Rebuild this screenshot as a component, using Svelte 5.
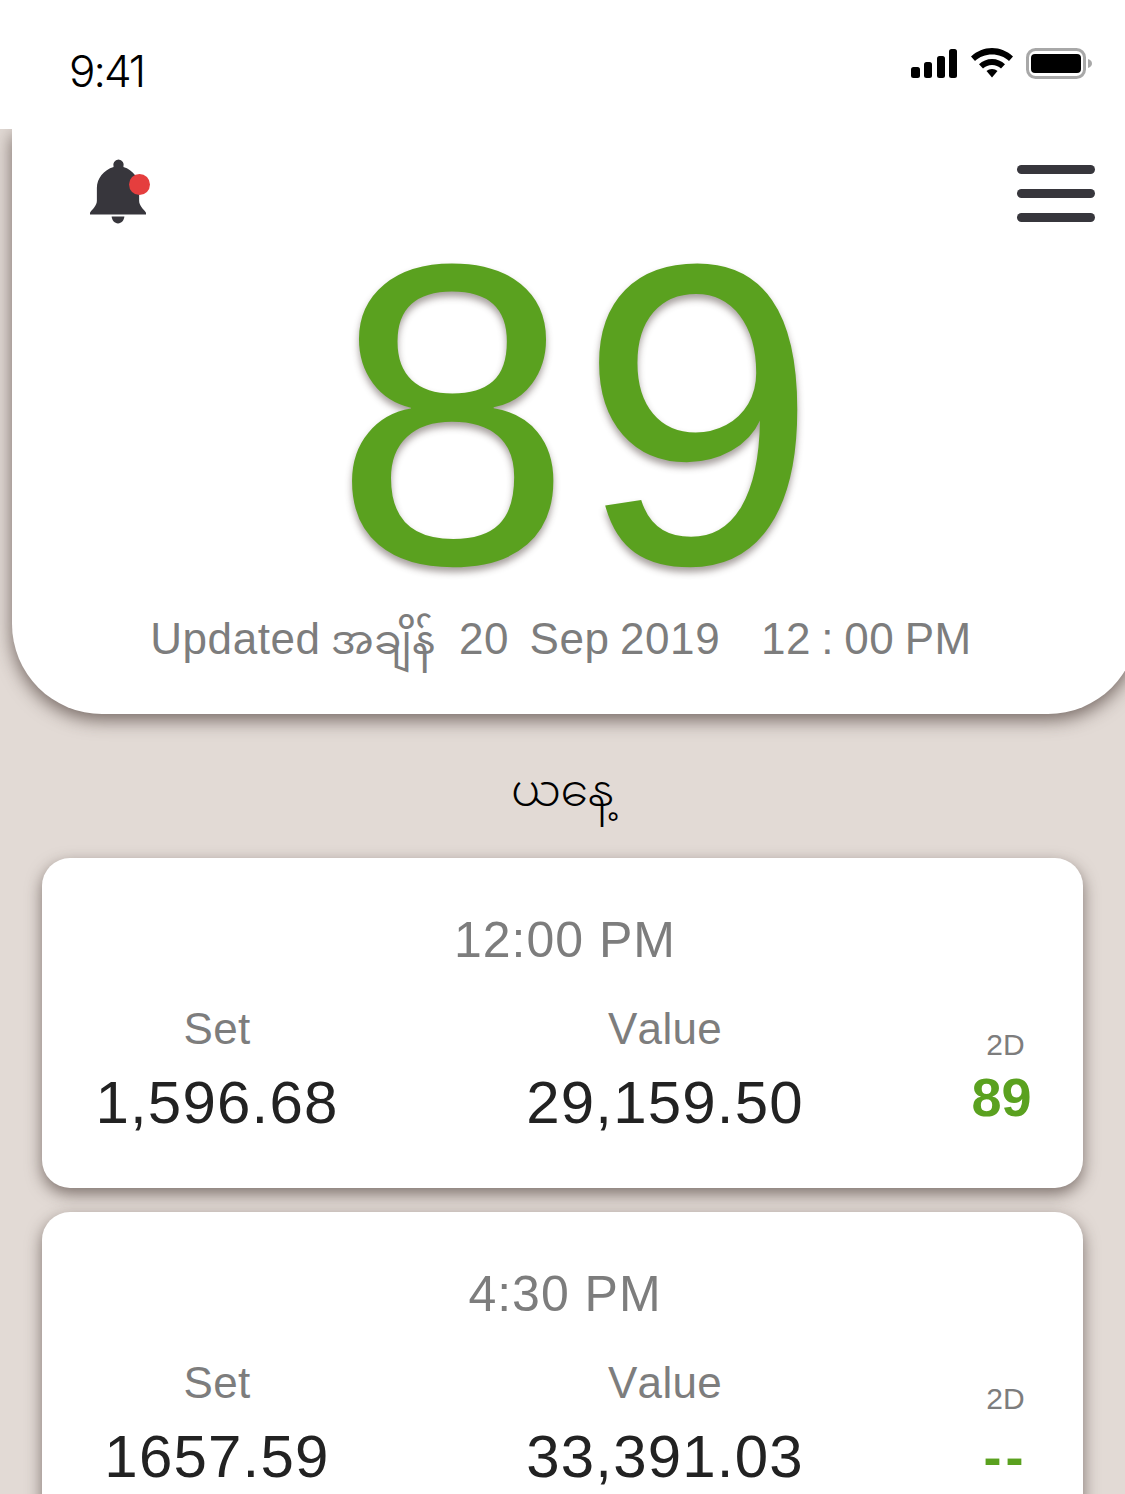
<script>
  const sessions = [
    { time: '12:00 PM', set: '1,596.68', value: '29,159.50', twoD: '89', open: false },
    { time: '4:30 PM', set: '1657.59', value: '33,391.03', twoD: '--', open: true }
  ];
</script>

<div class="screen">
  <header class="status">
    <span class="clock">9:41</span>
    <div class="status-icons">
      <svg class="signal" width="47" height="30" viewBox="0 0 47 30" fill="#000">
        <rect x="0" y="18" width="9" height="11" rx="2.5" />
        <rect x="13" y="13" width="8" height="16" rx="2.5" />
        <rect x="26" y="7" width="8" height="22" rx="2.5" />
        <rect x="38" y="0" width="8" height="29" rx="2.5" />
      </svg>
      <svg width="42" height="30" viewBox="0 0 42 30" fill="#000">
        <path d="M21 0C13 0 6 3 0 8.500L4 13C8.500 8.800 14.500 6.500 21 6.500S33.500 8.800 38 13L42 8.500C36 3 29 0 21 0Z" />
        <path d="M21 11C16 11 11.500 13 8 16.200L12 20.500C14.500 18.200 17.500 17 21 17S27.500 18.200 30 20.500L34 16.200C30.500 13 26 11 21 11Z" />
        <path d="M21 21C18.800 21 17 21.800 15.500 23L21 29.500L26.500 23C25 21.800 23.200 21 21 21Z" />
      </svg>
      <svg width="66" height="31" viewBox="0 0 66 31">
        <rect x="1.500" y="1.500" width="57" height="28" rx="8" fill="none" stroke="#a8a8a8" stroke-width="3" />
        <rect x="5" y="6" width="50" height="19" rx="4" fill="#000" />
        <path d="M62 11c2.500 .5 4 2.500 4 4.500s-1.500 4-4 4.500z" fill="#a8a8a8" />
      </svg>
    </div>
  </header>

  <section class="hero">
    <div class="hero-top">
      <div class="bell">
        <svg width="56" height="66" viewBox="0 0 57 66" fill="#37363c">
          <path d="M29 0a5.500 5.500 0 0 1 5 7.500C44 10.500 50 19 50 29V42C50 47 54 50 57 54V56H0V54C3 50 7 47 7 42V29C7 19 14 10.500 24 7.500A5.500 5.500 0 0 1 29 0Z" />
          <path d="M22 58H35C34.500 62 32 65 28.500 65S22.500 62 22 58Z" />
        </svg>
        <span class="dot"></span>
      </div>
      <div class="menu"><span></span><span></span><span></span></div>
    </div>
    <div class="big">89</div>
    <p class="updated">Updated <span class="my">အချိန်</span>&nbsp; 20&nbsp; Sep 2019 &nbsp; <span class="clock-time">12 : 00 PM</span></p>
  </section>

  <h2 class="day">ယနေ့</h2>

  <main class="cards">
    {#each sessions as s}
      <article class="card">
        <div class="card-time">{s.time}</div>
        <div class="card-row">
          <div class="col">
            <span class="label">Set</span>
            <span class="num">{s.set}</span>
          </div>
          <div class="col">
            <span class="label">Value</span>
            <span class="num">{s.value}</span>
          </div>
          <div class="col col-2d">
            <span class="label-sm">2D</span>
            <span class="result" class:open={s.open}>{s.twoD}</span>
          </div>
        </div>
      </article>
    {/each}
  </main>
</div>

<style>
  :global(body) {
    margin: 0;
    background: #e2dad5;
    overflow: hidden;
  }

  .screen {
    width: 1125px;
    height: 1494px;
    overflow: hidden;
    background: #e2dad5;
    font-family: "Liberation Sans", "Noto Sans Myanmar", "Noto Sans", sans-serif;
  }

  .status {
    position: relative;
    z-index: 2;
    height: 129px;
    box-sizing: border-box;
    background: #fff;
    display: flex;
    justify-content: space-between;
    padding: 48px 33px 0 69px;
  }

  .clock {
    font-size: 44px;
    line-height: 46px;
    font-weight: 300;
    color: #000;
    font-family: Inter, sans-serif;
    letter-spacing: -2px;
  }

  .status-icons {
    display: flex;
    align-items: flex-start;
    gap: 13px;
  }

  .signal {
    margin-top: 1px;
  }

  .hero {
    width: 1126px;
    height: 585px;
    margin-left: 12px;
    box-sizing: border-box;
    background: #fff;
    border-radius: 0 0 90px 90px;
    box-shadow: 0 6px 18px rgba(60, 45, 40, 0.65);
    padding: 30px 0 0;
    text-align: center;
  }

  .hero-top {
    display: flex;
    justify-content: space-between;
    align-items: flex-start;
    height: 66px;
    padding: 0 31px 0 77px;
    box-sizing: border-box;
    width: 1114px;
  }

  .bell {
    position: relative;
    width: 58px;
    height: 66px;
  }

  .dot {
    position: absolute;
    left: 40px;
    top: 15px;
    width: 21px;
    height: 21px;
    border-radius: 50%;
    background: #e53e3e;
  }

  .menu {
    display: flex;
    flex-direction: column;
    gap: 15px;
    padding-top: 6px;
  }

  .menu span {
    display: block;
    width: 78px;
    height: 9px;
    border-radius: 5px;
    background: #37363c;
  }

  .big {
    width: 1114px;
    padding-left: 20px;
    margin-bottom: 9px;
    box-sizing: border-box;
    font-size: 429px;
    line-height: 380px;
    color: #5aa11f;
    text-shadow: 0 5px 7px rgba(60, 45, 40, 0.45);
    letter-spacing: 7px;
  }

  .updated {
    margin: 0;
    width: 1098px;
    font-size: 44px;
    line-height: 50px;
    color: #7d7d7d;
    white-space: nowrap;
    letter-spacing: 0.6px;
    word-spacing: -2.6px;
  }

  .my {
    font-size: 40px;
    margin-right: 3px;
  }

  .clock-time {
    margin-left: 10px;
  }

  .day {
    margin: 55px 0 0;
    height: 89px;
    font-size: 44px;
    line-height: 44px;
    font-weight: 300;
    text-align: center;
    color: #000;
  }

  .cards {
    display: flex;
    flex-direction: column;
    gap: 24px;
    padding: 0 42px;
  }

  .card {
    height: 330px;
    flex: none;
    box-sizing: border-box;
    background: #fff;
    border-radius: 28px;
    box-shadow: 0 6px 16px rgba(60, 45, 40, 0.6);
    padding: 53px 0 0;
  }

  .card-time {
    text-align: center;
    font-size: 50px;
    line-height: 58px;
    color: #7d7d7d;
    letter-spacing: 1px;
    padding-left: 5px;
  }

  .card-row {
    display: grid;
    grid-template-columns: 350px 546px 1fr;
    margin-top: 32px;
  }

  .col {
    display: flex;
    flex-direction: column;
    align-items: center;
  }

  .label {
    font-size: 44px;
    line-height: 56px;
    color: #7d7d7d;
    font-kerning: none;
    letter-spacing: 0.3px;
  }

  .num {
    font-size: 60px;
    line-height: 72px;
    margin-top: 10px;
    color: #222;
    letter-spacing: 1.2px;
  }

  .col-2d {
    padding-top: 27px;
    padding-right: 10px;
  }

  .label-sm {
    font-size: 30px;
    line-height: 34px;
    color: #7d7d7d;
  }

  .result {
    font-size: 54px;
    line-height: 70px;
    font-weight: 700;
    color: #5aa11f;
    margin-right: 8px;
  }

  .result.open {
    letter-spacing: 4px;
    margin-right: 0;
    padding-top: 6px;
  }
</style>
